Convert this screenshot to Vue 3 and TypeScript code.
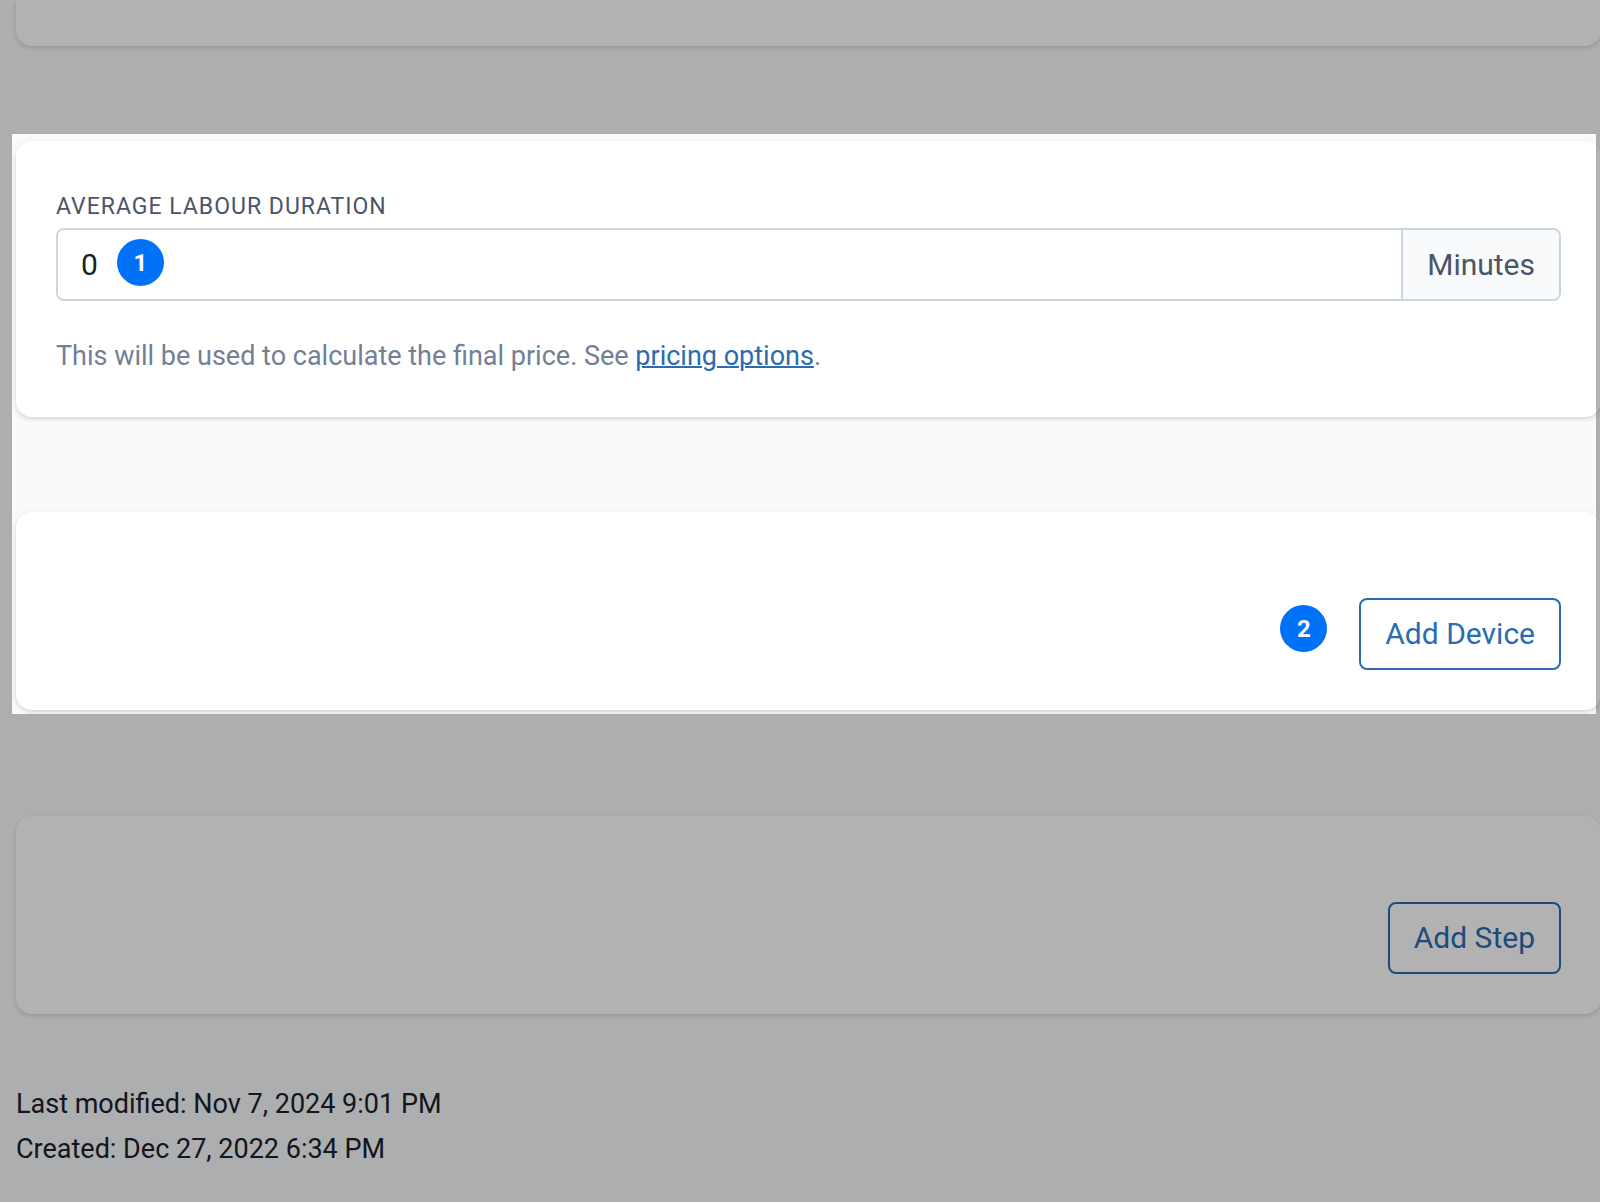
<script setup lang="ts">
import { ref } from 'vue'

const duration = ref('0')
const modified = 'Nov 7, 2024 9:01 PM'
const created = 'Dec 27, 2022 6:34 PM'
</script>

<template>
  <main class="page">
    <section class="card card-top"></section>

    <div class="spotlight">
      <section class="card card-duration">
        <label class="label" for="duration">Average labour duration</label>
        <div class="input-group">
          <input id="duration" v-model="duration" class="input" type="text" inputmode="numeric" />
          <span class="unit">Minutes</span>
          <span class="badge badge-input">1</span>
        </div>
        <p class="help">
          This will be used to calculate the final price. See <a href="#pricing">pricing options</a>.
        </p>
      </section>

      <section class="card card-action">
        <div class="anchor">
          <span class="badge badge-button">2</span>
          <button class="button" type="button">Add Device</button>
        </div>
      </section>
    </div>

    <section class="card card-action">
      <button class="button" type="button">Add Step</button>
    </section>

    <footer class="meta">
      <p>Last modified: {{ modified }}</p>
      <p>Created: {{ created }}</p>
    </footer>
  </main>
</template>

<style>
body {
  margin: 0;
  background: #f8fafc;
}
</style>

<style scoped>
.page {
  box-sizing: border-box;
  min-height: 100vh;
  padding-left: 16px;
  overflow: hidden;
  font-family: Roboto, "Liberation Sans", sans-serif;
  color: #1a202c;
  background: #f8fafc;
}

.card {
  box-sizing: border-box;
  padding: 40px;
  margin-right: -1px;
  border-radius: 16px;
  background: #fff;
  box-shadow: 0 2px 6px rgba(0, 0, 0, 0.1), 0 2px 4px rgba(0, 0, 0, 0.06);
}

.card-top {
  height: 46px;
  padding: 0;
  border-radius: 0 0 16px 16px;
}

/* The highlighted area; everything outside it is dimmed. */
.spotlight {
  position: relative;
  display: flex;
  flex-direction: column;
  gap: 95px;
  margin: 95px 0 106px;
}

.spotlight::after {
  content: "";
  position: absolute;
  inset: -7px 4px -4px -4px;
  box-shadow: 0 0 0 4000px rgba(0, 0, 0, 0.3);
  pointer-events: none;
}

.card-duration {
  padding-top: 50px;
}

.label {
  display: block;
  margin-bottom: 5px;
  font-size: 23px;
  line-height: 32px;
  letter-spacing: 1px;
  text-transform: uppercase;
  color: #4a5568;
}

.input-group {
  position: relative;
  display: flex;
  box-sizing: border-box;
  height: 73px;
  border: 2px solid #cbd5e0;
  border-radius: 8px;
  overflow: hidden;
}

.input {
  flex: 1;
  min-width: 0;
  padding: 0 23px;
  border: 0;
  outline: 0;
  font: inherit;
  font-size: 30px;
  color: inherit;
  background: #fff;
}

.unit {
  display: flex;
  align-items: center;
  padding: 0 24px;
  border-left: 2px solid #cbd5e0;
  font-size: 30px;
  color: #4a5568;
  background: #f8fafc;
}

.badge {
  position: absolute;
  display: flex;
  align-items: center;
  justify-content: center;
  width: 47px;
  height: 47px;
  border-radius: 50%;
  font-size: 24px;
  font-weight: 700;
  color: #fff;
  background: #0072f7;
}

.badge-input {
  top: 9px;
  left: 59px;
}

.badge-button {
  top: 7px;
  right: calc(100% + 32px);
}

.help {
  margin: 35px 0 0;
  font-size: 27px;
  line-height: 41px;
  color: #718096;
}

.help a {
  color: #2b6cb0;
  text-decoration: underline;
  text-decoration-thickness: 2px;
}

.card-action {
  display: flex;
  justify-content: flex-end;
  padding-top: 86px;
}

.anchor {
  position: relative;
}

.button {
  display: block;
  box-sizing: border-box;
  height: 72px;
  padding: 0 24px 2px;
  border: 2px solid #2b6cb0;
  border-radius: 8px;
  font: inherit;
  font-size: 30px;
  color: #2b6cb0;
  background: transparent;
}

.meta {
  padding: 68px 0 30px;
  font-size: 27px;
  line-height: 45px;
}

.meta p {
  margin: 0;
}
</style>
